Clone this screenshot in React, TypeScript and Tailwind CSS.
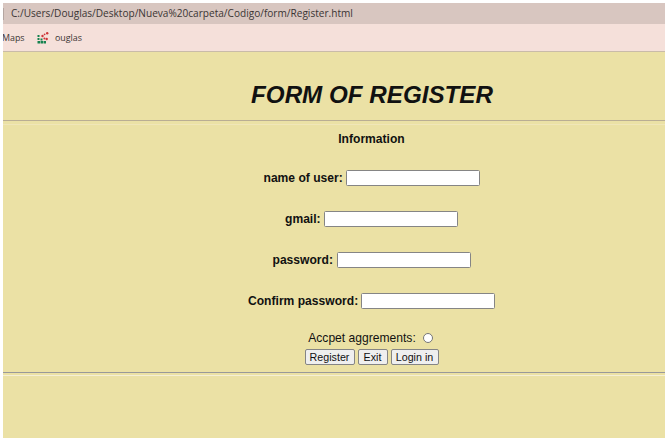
import React from "react";

type FieldProps = { label: string; type?: string; width: string };

function Field({ label, type = "text", width }: FieldProps) {
  return (
    <label className="flex h-[41px] items-start justify-center gap-[3px]">
      <span className={`${width} whitespace-nowrap text-[12.1px] leading-4 font-bold`}>{label}</span>
      <input type={type} className="h-4 w-[134px] rounded-[1.5px] border border-[#858585] bg-white px-0.5 text-xs outline-none" />
    </label>
  );
}

const buttonStyle =
  "h-4 rounded-[2px] border border-[#858585] bg-[#efefef] text-center text-[10.7px] leading-[14px] whitespace-nowrap";

export default function App() {
  return (
    <div className="h-[439px] w-[669px] overflow-hidden bg-white pt-[3px] pl-[3px]">
      <div className="flex h-[435px] w-[662px] flex-col overflow-hidden bg-[#ebe1a5] font-['Liberation_Sans',sans-serif] text-[#111]">
        <header className="h-[49px] shrink-0 border-b border-[#c9bba9] bg-[#f5e0da] font-['Open_Sans',sans-serif] text-[#3b3534]">
          <div className="flex h-[21px] items-center bg-[#d8c6c0]">
            <span className="h-3 w-px bg-[#b5a6a1]" />
            <span className="ml-[7px] h-[21px] text-[10.08px] leading-5 whitespace-nowrap">
              C:/Users/Douglas/Desktop/Nueva%20carpeta/Codigo/form/Register.html
            </span>
          </div>
          <nav className="flex h-[27px] items-center text-[8.9px]">
            <span className="-ml-px w-[35px] pt-px">Maps</span>
            <svg width="12" height="12" viewBox="0 0 12 12">
              <g fill="#16824f">
                <rect x="0.5" y="3" width="2" height="2" />
                <rect x="0.5" y="6" width="2" height="2" />
                <rect x="0.5" y="9" width="2.5" height="2.5" />
                <rect x="3.5" y="6.5" width="2" height="2" />
                <rect x="3.5" y="9" width="2.5" height="2.5" />
                <rect x="6.5" y="9" width="2.5" height="2.5" />
              </g>
              <g fill="#cd3438">
                <circle cx="5.5" cy="4" r="1.2" />
                <circle cx="7.6" cy="2.3" r="0.9" />
                <circle cx="10.2" cy="1.3" r="1.2" />
                <circle cx="7.4" cy="6.4" r="1" />
                <circle cx="9.7" cy="7" r="1.2" />
              </g>
            </svg>
            <span className="ml-[6px] pt-px">ouglas</span>
          </nav>
        </header>
        <main>
          <h1 className="h-[68px] pt-[27px] pl-[76px] text-center text-[24.2px] leading-8 font-bold italic">FORM OF REGISTER</h1>
          <div className="h-[5px] border-t border-t-[#b9ad94] border-b border-b-[#f0e6b9]" />
          <form className="h-[247px] pl-[75px]" onSubmit={(event) => event.preventDefault()}>
            <h2 className="h-[45px] pt-[6px] text-center text-[12.1px] leading-4 font-bold">Information</h2>
            <Field label="name of user:" width="w-[79px]" />
            <Field label="gmail:" width="w-[36px]" />
            <Field label="password:" width="w-[61px]" />
            <Field label="Confirm password:" width="w-[110px]" />
            <label className="-mt-[4px] flex h-[19px] items-start justify-center gap-[7px] pr-[2px] text-[12.1px] leading-4">
              <span>Accpet aggrements:</span>
              <input type="radio" className="mt-[3px] h-[10px] w-[10px] appearance-none rounded-full border border-[#767676] bg-white" />
            </label>
            <div className="flex justify-center gap-[3px]">
              <button type="submit" className={`${buttonStyle} w-[50px]`}>Register</button>
              <button type="button" className={`${buttonStyle} w-[30px]`}>Exit</button>
              <button type="button" className={`${buttonStyle} w-[48px]`}>Login in</button>
            </div>
          </form>
          <div className="h-1 border-t border-t-[#999] border-b border-b-[#f5efd6]" />
        </main>
      </div>
    </div>
  );
}
